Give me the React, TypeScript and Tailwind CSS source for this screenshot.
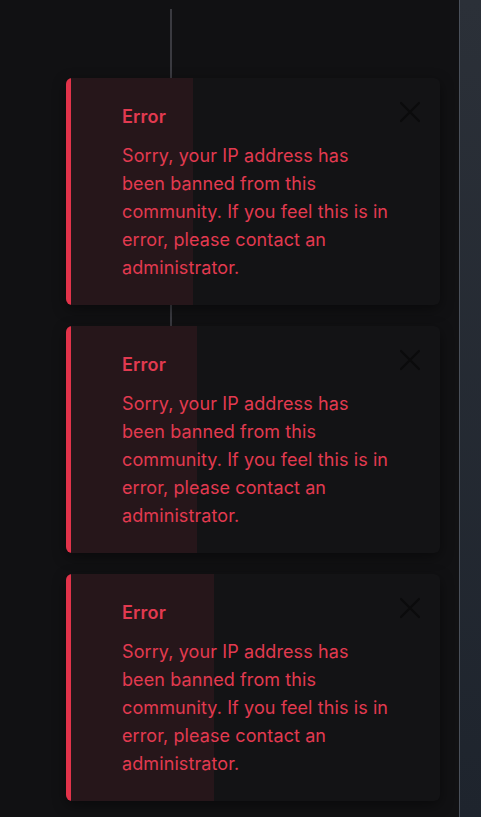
import React from 'react';

const toasts = [
  { id: 1, progress: 127 },
  { id: 2, progress: 131 },
  { id: 3, progress: 148 },
];

function Toast({ progress }: { progress: number }) {
  return (
    <div className="relative h-[227px] w-[374px] overflow-hidden rounded-md bg-[#131315] shadow-[0_4px_14px_rgba(0,0,0,0.45)]">
      <div className="absolute inset-y-0 left-0 bg-[#26161a]" style={{ width: progress }} />
      <div className="absolute inset-y-0 left-0 w-[5px] bg-[#e2334a]" />
      <button className="absolute right-[19px] top-[23px] text-[#0b0b0c]">
        <svg width="22" height="22" viewBox="0 0 22 22" fill="none" stroke="currentColor" strokeWidth="2.2" strokeLinecap="round">
          <path d="M2 2L20 20M20 2L2 20" />
        </svg>
      </button>
      <div className="relative pl-[56px] pr-10 pt-[27px] text-[#e23a50]">
        <div className="text-[18px] font-semibold leading-[24px] tracking-[0.2px]">Error</div>
        <p className="mt-[13px] whitespace-nowrap text-[18px] leading-[28px] tracking-[0.1px]">
          Sorry, your IP address has
          <br />
          been banned from this
          <br />
          community. If you feel this is in
          <br />
          error, please contact an
          <br />
          administrator.
        </p>
      </div>
    </div>
  );
}

export default function App() {
  return (
    <div className="flex h-[817px] w-full bg-[#111113] font-['Inter',sans-serif]">
      <div className="relative flex-1">
        <div className="absolute left-[170px] top-[9px] h-[317px] w-[2px] bg-[#3a3a40]" />
        <div className="relative flex flex-col gap-[21px] pl-[66px] pt-[78px]">
          {toasts.map(t => (
            <Toast key={t.id} progress={t.progress} />
          ))}
        </div>
      </div>
      <div className="w-[22px] border-l border-[#4a505a] bg-gradient-to-b from-[#2b3038] to-[#1e242d]" />
    </div>
  );
}
